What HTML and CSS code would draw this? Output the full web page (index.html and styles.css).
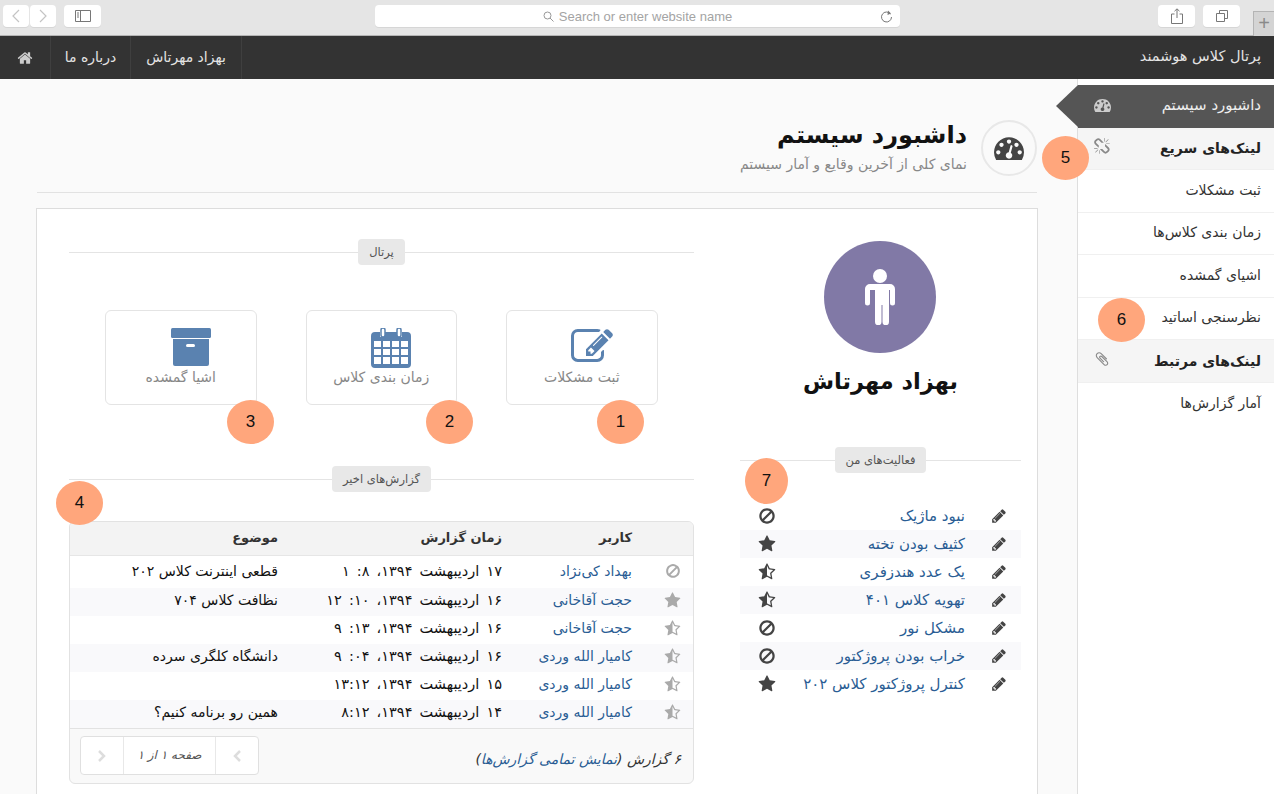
FILE: index.html
```html
<!DOCTYPE html>
<html lang="fa">
<head>
    <meta charset="UTF-8">
    <title>پرتال کلاس هوشمند</title>
    <link rel="stylesheet" href="styles.css">
</head>
<body>
    <svg class="defs" xmlns="http://www.w3.org/2000/svg">
        <symbol id="i-star" viewBox="0 0 1792 1792"><path d="M1728 647q0 22-26 48l-363 354 86 500q1 7 1 20 0 21-10.5 35.5t-30.5 14.5q-19 0-40-12l-449-236-449 236q-22 12-40 12-21 0-31.5-14.5t-10.5-35.5q0-6 2-20l86-500-364-354q-25-27-25-48 0-37 56-46l502-73 225-455q19-41 49-41t49 41l225 455 502 73q56 9 56 46z"/></symbol>
        <symbol id="i-star-half" viewBox="0 0 1792 1792"><path d="M1250 957l257-250-356-52-66-10-30-60-159-322v963l59 31 318 168-60-355-12-66zm452-262l-363 354 86 500q5 33-6 51.5t-34 18.5q-17 0-40-12l-449-236-449 236q-23 12-40 12-23 0-34-18.5t-6-51.5l86-500-364-354q-32-32-23-59.5t54-34.5l502-73 225-455q20-41 49-41 28 0 49 41l225 455 502 73q45 7 54 34.5t-24 59.5z"/></symbol>
        <symbol id="i-ban" viewBox="0 0 1792 1792"><path d="M1440 893q0-161-87-295l-754 753q137 89 297 89 111 0 211.5-43.5t173.5-116.5 116-174.5 43-212.5zm-999 299l755-754q-135-91-300-91-148 0-273 73t-198 199-73 274q0 162 89 299zm1223-299q0 157-61 300t-163.5 246-245 164-298.5 61-298.5-61-245-164-163.5-246-61-300 61-299.5 163.5-245.5 245-164 298.5-61 298.5 61 245 164 163.5 245.5 61 299.5z"/></symbol>
        <symbol id="i-pencil" viewBox="0 0 1792 1792"><path d="M491 1536l91-91-235-235-91 91v107h128v128h107zm523-928q0-22-22-22-10 0-17 7l-542 542q-7 7-7 17 0 22 22 22 10 0 17-7l542-542q7-7 7-17zm-54-192l416 416-832 832h-416v-416zm683 96q0 53-37 90l-166 166-416-416 166-165q36-38 90-38 53 0 91 38l235 234q37 39 37 91z"/></symbol>
        <symbol id="i-home" viewBox="0 0 1792 1792"><path d="M1472 992v480q0 26-19 45t-45 19h-384v-384h-256v384h-384q-26 0-45-19t-19-45v-480q0-1 .5-3t.5-3l575-474 575 474q1 2 1 6zm223-69l-62 74q-8 9-21 11h-3q-13 0-21-7l-692-577-692 577q-12 8-24 7-13-2-21-11l-62-74q-8-10-7-23.5t11-21.5l719-599q32-26 76-26t76 26l244 204v-195q0-14 9-23t23-9h192q14 0 23 9t9 23v408l219 182q10 8 11 21.5t-7 23.5z"/></symbol>
        <symbol id="i-dashboard" viewBox="0 200 1792 1392"><path d="M384 1152q0-53-37.5-90.5t-90.5-37.5-90.5 37.5-37.5 90.5 37.5 90.5 90.5 37.5 90.5-37.5 37.5-90.5zm192-448q0-53-37.5-90.5t-90.5-37.5-90.5 37.5-37.5 90.5 37.5 90.5 90.5 37.5 90.5-37.5 37.5-90.5zm428 481l101-382q6-26-7.5-48.5t-38.5-29.5-48 6.5-30 39.5l-101 382q-60 5-107 43.5t-63 98.5q-20 77 20 146t117 89 146-20 89-117q16-60-6-117t-72-91zm660-33q0-53-37.5-90.5t-90.5-37.5-90.5 37.5-37.5 90.5 37.5 90.5 90.5 37.5 90.5-37.5 37.5-90.5zm-640-640q0-53-37.5-90.5t-90.5-37.5-90.5 37.5-37.5 90.5 37.5 90.5 90.5 37.5 90.5-37.5 37.5-90.5zm448 192q0-53-37.5-90.5t-90.5-37.5-90.5 37.5-37.5 90.5 37.5 90.5 90.5 37.5 90.5-37.5 37.5-90.5zm320 448q0 261-141 483-19 29-54 29h-1402q-35 0-54-29-141-221-141-483 0-182 71-348t191-286 286-191 348-71 348 71 286 191 191 286 71 348z"/></symbol>
        <symbol id="i-unlink" viewBox="0 0 1792 1792"><path d="M439 1271l-256 256q-11 9-23 9t-23-9q-9-10-9-23t9-23l256-256q10-9 23-9t23 9q9 10 9 23t-9 23zm169 41v320q0 14-9 23t-23 9-23-9-9-23v-320q0-14 9-23t23-9 23 9 9 23zm-224-224q0 14-9 23t-23 9h-320q-14 0-23-9t-9-23 9-23 23-9h320q14 0 23 9t9 23zm1264 128q0 120-85 203l-147 146q-83 83-203 83-121 0-204-85l-334-335q-21-21-42-56l239-18 273 274q27 27 68 27.5t68-26.5l147-146q28-28 28-67 0-40-28-68l-274-275 18-239q35 21 56 42l336 336q84 86 84 204zm-617-724l-239 18-273-274q-28-28-68-28-39 0-68 27l-147 146q-28 28-28 67 0 40 28 68l274 274-18 240q-35-21-56-42l-336-336q-84-86-84-204 0-120 85-203l147-146q83-83 203-83 121 0 204 85l334 335q21 21 42 56zm633 84q0 14-9 23t-23 9h-320q-14 0-23-9t-9-23 9-23 23-9h320q14 0 23 9t9 23zm-544-544v320q0 14-9 23t-23 9-23-9-9-23v-320q0-14 9-23t23-9 23 9 9 23zm407 151l-256 256q-11 9-23 9t-23-9q-9-10-9-23t9-23l256-256q10-9 23-9t23 9q9 10 9 23t-9 23z"/></symbol>
        <symbol id="i-clip" viewBox="0 0 1792 1792"><path d="M1596 1385q0 117-79 196t-196 79q-135 0-235-100l-777-776q-113-115-113-271 0-159 110-270t269-111q158 0 273 113l605 606q10 10 10 22 0 16-30.5 46.5t-46.5 30.5q-13 0-23-10l-606-607q-79-77-181-77-106 0-179 75t-73 181q0 105 76 181l776 777q63 63 145 63 64 0 106-42t42-106q0-82-63-145l-581-581q-26-24-60-24-29 0-48 19t-19 48q0 32 25 59l410 410q10 10 10 22 0 16-31 47t-47 31q-12 0-22-10l-410-410q-63-61-63-149 0-82 57-139t139-57q88 0 149 63l581 581q100 98 100 235z"/></symbol>
    </svg>

    <div class="browser-bar">
        <div class="bar-group">
            <div class="nav-pair">
                <span class="bar-btn small"><svg width="12" height="16" viewBox="0 0 12 16"><path d="M9 2 3 8l6 6" fill="none" stroke="#c4c4c4" stroke-width="1.2"/></svg></span>
                <span class="bar-btn small"><svg width="12" height="16" viewBox="0 0 12 16"><path d="m3 2 6 6-6 6" fill="none" stroke="#c4c4c4" stroke-width="1.2"/></svg></span>
            </div>
            <span class="bar-btn wide"><svg width="16" height="12" viewBox="0 0 16 12"><path d="M.5.5h15v11H.5zM5.5.5v11" fill="none" stroke="#777"/><path d="M2 3h2M2 5h2M2 7h2" stroke="#777"/></svg></span>
        </div>
        <div class="url-box">
            <svg width="11" height="11" viewBox="0 0 11 11"><circle cx="4.5" cy="4.5" r="3.5" fill="none" stroke="#999"/><path d="m7 7 3.500 3.500" stroke="#999"/></svg>
            <span>Search or enter website name</span>
            <svg class="reload" width="13" height="13" viewBox="0 0 13 13"><path d="M10.500 4A5 5 0 1 0 11.500 7" fill="none" stroke="#777"/><path d="M8 .5 11 3.500 7.500 5z" fill="#777"/></svg>
        </div>
        <div class="bar-group">
            <span class="bar-btn wide"><svg width="12" height="16" viewBox="0 0 12 16"><path d="M3.500 6H.5v9.500h11V6h-3M6 10V1M3.500 3.200 6 .8l2.500 2.400" fill="none" stroke="#777"/></svg></span>
            <span class="bar-btn wide"><svg width="12" height="12" viewBox="0 0 12 12"><path d="M.5 3.500h8v8h-8zM3.500 3.500v-3h8v8h-3" fill="none" stroke="#777"/></svg></span>
            <span class="new-tab">+</span>
        </div>
    </div>

    <nav class="topnav">
        <div class="nav-links">
            <a class="nav-link home-link"><svg class="icon" width="16" height="16"><use href="#i-home"/></svg></a>
            <a class="nav-link about-link">درباره ما</a>
            <a class="nav-link user-link">بهزاد مهرتاش</a>
        </div>
        <div class="brand">پرتال کلاس هوشمند</div>
    </nav>

    <div class="app">
        <aside class="sidebar">
            <a class="side-item active">داشبورد سیستم <svg class="icon" width="17" height="14"><use href="#i-dashboard"/></svg></a>
            <a class="side-item head">لینک‌های سریع <svg class="icon" width="17" height="17"><use href="#i-unlink"/></svg></a>
            <a class="side-item">ثبت مشکلات</a>
            <a class="side-item">زمان بندی کلاس‌ها</a>
            <a class="side-item">اشیای گمشده</a>
            <a class="side-item">نظرسنجی اساتید</a>
            <a class="side-item head">لینک‌های مرتبط <svg class="icon" width="16" height="16"><use href="#i-clip"/></svg></a>
            <a class="side-item">آمار گزارش‌ها</a>
        </aside>

        <main class="content">
            <header class="page-head">
                <div class="head-icon"><svg class="icon" width="30" height="24"><use href="#i-dashboard"/></svg></div>
                <div>
                    <h1>داشبورد سیستم</h1>
                    <p>نمای کلی از آخرین وقایع و آمار سیستم</p>
                </div>
            </header>

            <section class="panel">
                <div class="col-profile">
                    <div class="avatar">
                        <svg width="32" height="56" viewBox="0 0 32 56" fill="#fff"><circle cx="16" cy="7" r="7"/><path d="M6 15h20a5 5 0 0 1 5 5v14a2.500 2.500 0 0 1-5 0V21h-1v32a3 3 0 0 1-6.500 0V36h-1v17a3 3 0 0 1-6.500 0V21H6v13a2.500 2.500 0 0 1-5 0V20a5 5 0 0 1 5-5z"/></svg>
                    </div>
                    <h2 class="profile-name">بهزاد مهرتاش</h2>
                    <div class="divider"><span>فعالیت‌های من</span></div>
                    <ul class="activity">
                        <li><svg class="icon pen" width="16" height="16"><use href="#i-pencil"/></svg><a>نبود ماژیک</a><svg class="icon state" width="18" height="18"><use href="#i-ban"/></svg></li>
                        <li><svg class="icon pen" width="16" height="16"><use href="#i-pencil"/></svg><a>کثیف بودن تخته</a><svg class="icon state" width="18" height="18"><use href="#i-star"/></svg></li>
                        <li><svg class="icon pen" width="16" height="16"><use href="#i-pencil"/></svg><a>یک عدد هندزفری</a><svg class="icon state" width="18" height="18"><use href="#i-star-half"/></svg></li>
                        <li><svg class="icon pen" width="16" height="16"><use href="#i-pencil"/></svg><a>تهویه کلاس ۴۰۱</a><svg class="icon state" width="18" height="18"><use href="#i-star-half"/></svg></li>
                        <li><svg class="icon pen" width="16" height="16"><use href="#i-pencil"/></svg><a>مشکل نور</a><svg class="icon state" width="18" height="18"><use href="#i-ban"/></svg></li>
                        <li><svg class="icon pen" width="16" height="16"><use href="#i-pencil"/></svg><a>خراب بودن پروژکتور</a><svg class="icon state" width="18" height="18"><use href="#i-ban"/></svg></li>
                        <li><svg class="icon pen" width="16" height="16"><use href="#i-pencil"/></svg><a>کنترل پروژکتور کلاس ۲۰۲</a><svg class="icon state" width="18" height="18"><use href="#i-star"/></svg></li>
                    </ul>
                </div>

                <div class="col-main">
                    <div class="divider"><span>پرتال</span></div>
                    <div class="shortcuts">
                        <a class="shortcut">
                            <svg class="tile-icon" width="42" height="36" viewBox="0 -40 1792 1536"><path d="M888 1056l116-116-152-152-116 116v56h96v96h56zm440-720q-16-16-33 1l-350 350q-17 17-1 33t33-1l350-350q17-17 1-33zm80 594v190q0 119-84.500 203.500t-203.500 84.500h-832q-119 0-203.500-84.500t-84.500-203.500v-832q0-119 84.500-203.500t203.500-84.500h832q63 0 117 25 15 7 18 23 3 17-9 29l-49 49q-14 14-32 8-23-6-45-6h-832q-66 0-113 47t-47 113v832q0 66 47 113t113 47h832q66 0 113-47t47-113v-126q0-13 9-22l64-64q15-15 35-7t20 29zm-96-738l288 288-672 672h-288v-288zm444 132l-92 92-288-288 92-92q28-28 68-28t68 28l152 152q28 28 28 68t-28 68z"/></svg>
                            <span class="tile-label">ثبت مشکلات</span>
                        </a>
                        <a class="shortcut">
                            <svg class="tile-icon" width="40" height="40" viewBox="0 0 40 40"><path d="M4 4h5v5h5V4h12v5h5V4h5a4 4 0 0 1 4 4v28a4 4 0 0 1-4 4H4a4 4 0 0 1-4-4V8a4 4 0 0 1 4-4z"/><rect x="10" y="0" width="4" height="9" rx="2" fill="#fff" stroke="#5a82b0" stroke-width="1.500"/><rect x="26" y="0" width="4" height="9" rx="2" fill="#fff" stroke="#5a82b0" stroke-width="1.500"/><path d="M3 13h7v6H3zM12 13h7v6h-7zM21 13h7v6h-7zM30 13h7v6h-7zM3 21h7v6H3zM12 21h7v6h-7zM21 21h7v6h-7zM30 21h7v6h-7zM3 29h7v7H3zM12 29h7v7h-7zM21 29h7v7h-7zM30 29h7v7h-7z" fill="#fff"/></svg>
                            <span class="tile-label">زمان بندی کلاس</span>
                        </a>
                        <a class="shortcut">
                            <svg class="tile-icon" width="40" height="38" viewBox="0 0 40 38"><rect x="0" y="0" width="40" height="10" rx="1.500"/><path d="M2 11h36v25a2 2 0 0 1-2 2H4a2 2 0 0 1-2-2z"/><rect x="15" y="16" width="9" height="3" rx="1.500" fill="#fff"/></svg>
                            <span class="tile-label">اشیا گمشده</span>
                        </a>
                    </div>

                    <div class="divider"><span>گزارش‌های اخیر</span></div>
                    <div class="report-box">
                        <table class="reports">
                            <thead>
                                <tr><th class="c-state"></th><th class="c-user">کاربر</th><th class="c-time">زمان گزارش</th><th>موضوع</th></tr>
                            </thead>
                            <tbody>
                                <tr class="first"><td class="c-state"><svg class="icon" width="16" height="16"><use href="#i-ban"/></svg></td><td><a>بهداد کی‌نژاد</a></td><td class="when">۱۷ اردیبهشت ۱۳۹۴، ۸: ۱</td><td>قطعی اینترنت کلاس ۲۰۲</td></tr>
                                <tr><td class="c-state"><svg class="icon" width="17" height="17"><use href="#i-star"/></svg></td><td><a>حجت آقاخانی</a></td><td class="when">۱۶ اردیبهشت ۱۳۹۴، ۱۰: ۱۲</td><td>نظافت کلاس ۷۰۴</td></tr>
                                <tr><td class="c-state"><svg class="icon" width="17" height="17"><use href="#i-star-half"/></svg></td><td><a>حجت آقاخانی</a></td><td class="when">۱۶ اردیبهشت ۱۳۹۴، ۱۳: ۹</td><td></td></tr>
                                <tr><td class="c-state"><svg class="icon" width="17" height="17"><use href="#i-star-half"/></svg></td><td><a>کامیار الله وردی</a></td><td class="when">۱۶ اردیبهشت ۱۳۹۴، ۰۴: ۹</td><td>دانشگاه کلگری سرده</td></tr>
                                <tr><td class="c-state"><svg class="icon" width="17" height="17"><use href="#i-star-half"/></svg></td><td><a>کامیار الله وردی</a></td><td class="when">۱۵ اردیبهشت ۱۳۹۴، ۱۳:۱۲</td><td></td></tr>
                                <tr><td class="c-state"><svg class="icon" width="17" height="17"><use href="#i-star-half"/></svg></td><td><a>کامیار الله وردی</a></td><td class="when">۱۴ اردیبهشت ۱۳۹۴، ۸:۱۲</td><td>همین رو برنامه کنیم؟</td></tr>
                            </tbody>
                        </table>
                        <div class="report-foot">
                            <em>۶ گزارش (<a>نمایش تمامی گزارش‌ها</a>)</em>
                            <div class="pager">
                                <span class="pg-btn"><svg width="10" height="14" viewBox="0 0 10 14"><path d="m2 2 5 5-5 5" fill="none" stroke="#ddd" stroke-width="2.500"/></svg></span>
                                <span class="pg-text">صفحه ۱ از ۱</span>
                                <span class="pg-btn"><svg width="10" height="14" viewBox="0 0 10 14"><path d="M8 2 3 7l5 5" fill="none" stroke="#ddd" stroke-width="2.500"/></svg></span>
                            </div>
                        </div>
                    </div>
                </div>
            </section>
        </main>
    </div>

    <span class="marker m1">1</span>
    <span class="marker m2">2</span>
    <span class="marker m3">3</span>
    <span class="marker m4">4</span>
    <span class="marker m5">5</span>
    <span class="marker m6">6</span>
    <span class="marker m7">7</span>
</body>
</html>
```

FILE: styles.css
```css
html, body {
    margin: 0;
    height: 794px;
    overflow: hidden;
}
body {
    position: relative;
    font-family: "DejaVu Sans", "Noto Sans", sans-serif;
    font-size: 14px;
    color: #333;
    background-color: #fafafa;
}
a {
    text-decoration: none;
}
.defs {
    display: none;
}
.icon {
    fill: currentColor;
    flex: none;
}

/* browser chrome */
.browser-bar {
    display: flex;
    justify-content: space-between;
    align-items: flex-start;
    box-sizing: border-box;
    height: 36px;
    padding: 5px 0 0 3px;
    background-color: #e5e5e5;
    border-bottom: 1px solid #b4b4b4;
}
.bar-group {
    display: flex;
    gap: 8px;
}
.nav-pair {
    display: flex;
    gap: 1px;
}
.bar-btn {
    display: flex;
    align-items: center;
    justify-content: center;
    height: 22px;
    background-color: #fff;
    border-radius: 4px;
    box-shadow: 0 1px 0 #d6d6d6;
}
.bar-btn.small {
    width: 26px;
}
.bar-btn.wide {
    width: 37px;
}
.url-box {
    position: relative;
    display: flex;
    align-items: center;
    justify-content: center;
    gap: 5px;
    width: 525px;
    height: 22px;
    margin-left: 16px;
    background-color: #fff;
    border-radius: 4px;
    box-shadow: 0 1px 0 #d6d6d6;
    font-family: "Liberation Sans", sans-serif;
    font-size: 13px;
    color: #a4a4a4;
}
.reload {
    position: absolute;
    right: 7px;
    top: 5px;
}
.new-tab {
    box-sizing: border-box;
    width: 21px;
    height: 25px;
    margin: 6px 0 0 5px;
    border: 1px solid #b4b4b4;
    border-right: none;
    border-bottom: none;
    background-color: #d4d4d4;
    color: #8a8a8a;
    font-family: "Liberation Sans", sans-serif;
    font-size: 20px;
    line-height: 23px;
    text-align: center;
}

/* top navigation */
.topnav {
    display: flex;
    justify-content: space-between;
    height: 43px;
    background-color: #333;
    color: #e4e4e4;
    line-height: 41px;
}
.nav-links {
    display: flex;
}
.nav-link {
    display: flex;
    align-items: center;
    justify-content: center;
    box-sizing: border-box;
    border-right: 1px solid #3f3f3f;
}
.home-link {
    width: 51px;
    color: #ccc;
}
.about-link {
    width: 80px;
}
.user-link {
    width: 111px;
}
.brand {
    padding-right: 13px;
    font-size: 14.5px;
}

/* layout */
.app {
    display: flex;
    direction: rtl;
    height: 715px;
}
.sidebar {
    box-sizing: border-box;
    width: 197px;
    padding-top: 6px;
    background-color: #fff;
    border-left: 1px solid #dedede;
}
.side-item {
    display: flex;
    align-items: center;
    justify-content: space-between;
    box-sizing: border-box;
    height: 42.5px;
    padding: 0 13px 2px 16px;
    color: #333;
    border-bottom: 1px solid #f0f0f0;
}
.side-item:last-child {
    border-bottom: none;
}
.side-item.active {
    position: relative;
    background-color: #555;
    color: #eee;
    font-size: 15px;
    border-bottom: none;
}
.side-item.active .icon {
    color: #ccc;
}
.side-item.active::after {
    content: "";
    position: absolute;
    left: -22px;
    top: 0;
    border-style: solid;
    border-width: 21px 22px 21px 0;
    border-color: transparent #555 transparent transparent;
}
.side-item.head {
    padding-bottom: 0;
    background-color: #f5f5f5;
    font-weight: bold;
    color: #222;
}
.side-item.head .icon {
    color: #8a8a8a;
    margin-top: -3px;
}

.content {
    flex: 1;
    padding: 41px 40px 0 36px;
}
.page-head {
    display: flex;
    align-items: flex-start;
    gap: 14px;
    height: 72px;
    margin-left: 1px;
    border-bottom: 1px solid #e2e2e2;
}
.head-icon {
    display: flex;
    align-items: center;
    justify-content: center;
    box-sizing: border-box;
    width: 56px;
    height: 56px;
    border: 2px solid #e8e8e8;
    border-radius: 50%;
    color: #444;
}
.page-head h1 {
    margin: 0;
    font-size: 24px;
    line-height: 30px;
    color: #111;
}
.page-head p {
    margin: 2px 0 0;
    font-size: 14px;
    line-height: 24px;
    color: #888;
}
.panel {
    display: flex;
    gap: 46px;
    height: 620px;
    margin: 15px -1px 0 0;
    padding: 0 16px 0 32px;
    background-color: #fff;
    border: 1px solid #ddd;
}

/* profile column */
.col-profile {
    width: 281px;
    padding-top: 32px;
}
.avatar {
    display: flex;
    align-items: center;
    justify-content: center;
    width: 112px;
    height: 112px;
    margin: 0 85px 0 auto;
    background-color: #8179a6;
    border-radius: 50%;
}
.profile-name {
    margin: 12px 0 50px;
    font-size: 22.5px;
    line-height: 32px;
    text-align: center;
    color: #111;
}
.divider {
    display: flex;
    align-items: center;
}
.divider::before,
.divider::after {
    content: "";
    flex: 1;
    height: 1px;
    background-color: #e4e4e4;
}
.divider span {
    padding: 0 11px;
    background-color: #e8e8e8;
    border-radius: 4px;
    font-size: 11.5px;
    line-height: 26px;
    color: #555;
}
.activity {
    list-style: none;
    margin: 29px 0 0;
    padding: 0;
}
.activity li {
    display: flex;
    align-items: center;
    height: 28px;
    padding-right: 14px;
    color: #444;
}
.activity li:nth-child(even) {
    background-color: #f9f9fb;
}
.activity a,
.reports a,
.report-foot a {
    color: #2a5d94;
}
.activity a {
    margin-right: 26px;
    font-size: 15px;
}
.activity .state {
    margin-right: auto;
    margin-left: 18px;
}

/* main column */
.col-main {
    flex: 1;
    padding-top: 30px;
}
.shortcuts {
    display: flex;
    gap: 49px;
    margin: 45px 0 61px;
    padding-right: 36.5px;
}
.shortcut {
    display: flex;
    flex-direction: column;
    align-items: center;
    box-sizing: border-box;
    width: 151.5px;
    height: 95px;
    padding: 17px 0 19px;
    background-color: #fff;
    border: 1px solid #e4e4e4;
    border-radius: 6px;
    color: #888;
}
.tile-icon {
    fill: #5a82b0;
    margin-left: 20px;
}
.tile-label {
    margin-top: auto;
}
.report-box {
    margin-top: 29px;
    background-color: #f9f9f9;
    border: 1px solid #e2e2e2;
    border-radius: 6px;
    overflow: hidden;
}
.reports {
    width: 100%;
    border-collapse: collapse;
    table-layout: fixed;
    color: #111;
}
.reports th {
    box-sizing: border-box;
    height: 33px;
    padding: 0 0 2px;
    background-color: #f3f3f3;
    border-bottom: 1px solid #e6e6e6;
    text-align: right;
    font-size: 13px;
    font-weight: bold;
    color: #333;
}
.reports td {
    box-sizing: border-box;
    height: 28px;
    padding: 0 0 4px;
    background-color: #fff;
}
.reports tr.first td {
    height: 33px;
    padding-bottom: 2px;
}
.reports tbody tr:nth-child(even) td {
    background-color: #f9f9fb;
}
.reports .c-state {
    width: 61px;
    text-align: center;
    color: #aaa;
}
.reports .c-state .icon {
    display: block;
    margin: 0 12px 0 auto;
}
.reports .c-user {
    width: 130px;
}
.reports .c-time {
    width: 224px;
}
.reports .when {
    font-size: 14.5px;
    word-spacing: 2.5px;
}
.report-foot {
    display: flex;
    align-items: center;
    justify-content: space-between;
    box-sizing: border-box;
    height: 55px;
    padding: 0 12px 1px 10px;
    border-top: 1px solid #e2e2e2;
    color: #333;
}
.report-foot em {
    margin-top: 6px;
}
.pager {
    display: flex;
    direction: ltr;
    box-sizing: border-box;
    height: 39px;
    background-color: #fff;
    border: 1px solid #e0e0e0;
    border-radius: 4px;
}
.pg-btn {
    display: flex;
    align-items: center;
    justify-content: center;
    width: 42px;
}
.pg-text {
    box-sizing: border-box;
    width: 93px;
    border-left: 1px solid #e8e8e8;
    border-right: 1px solid #e8e8e8;
    direction: rtl;
    font-size: 12px;
    font-style: italic;
    line-height: 37px;
    text-align: center;
    color: #555;
}

/* numbered callouts over the page */
.marker {
    position: absolute;
    width: 47px;
    height: 44px;
    background-color: #ffa67c;
    border-radius: 50%;
    font-family: "Liberation Sans", sans-serif;
    font-size: 17px;
    line-height: 44px;
    text-align: center;
    color: #111;
}
.m1 { left: 597px; top: 400px; }
.m2 { left: 426px; top: 400px; }
.m3 { left: 227px; top: 400px; }
.m4 { left: 56px; top: 481px; }
.m5 { left: 1042px; top: 136px; }
.m6 { left: 1098px; top: 298px; }
.m7 { left: 745px; top: 458px; width: 43px; height: 46px; line-height: 46px; }
```
